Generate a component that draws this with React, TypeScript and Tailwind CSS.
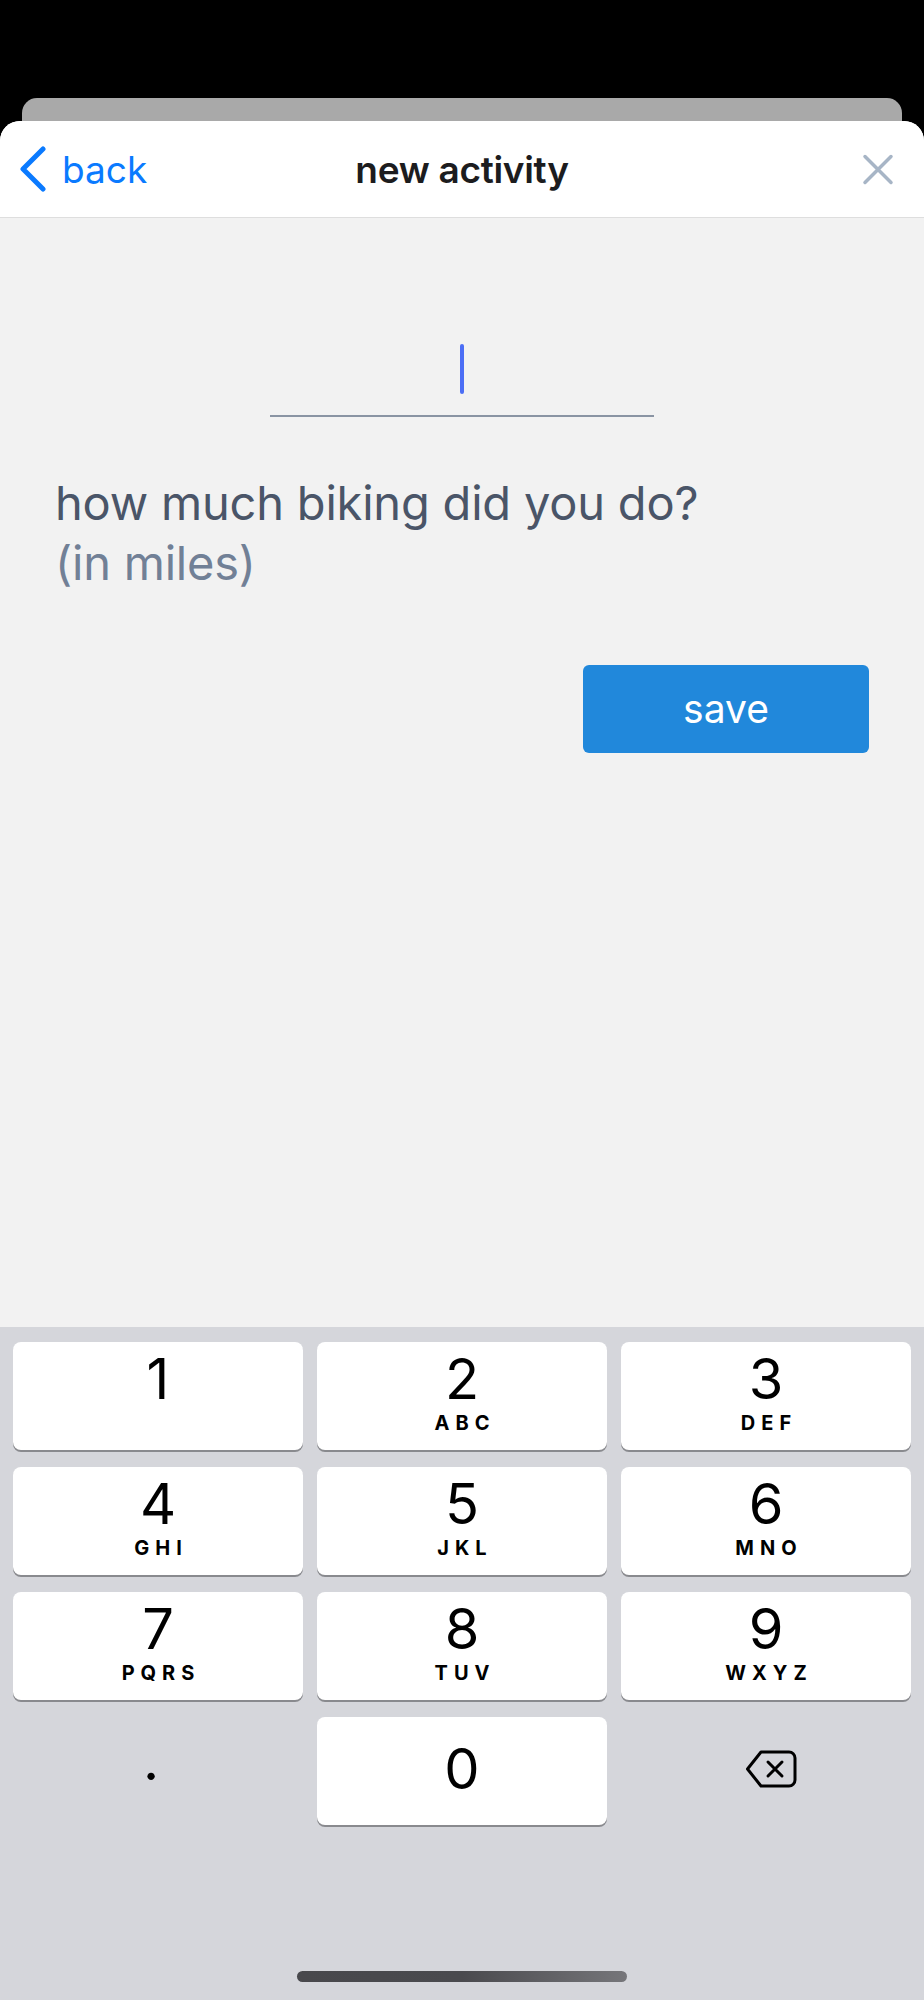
import React from 'react';

const keys = [
  { n: '1', l: '' },
  { n: '2', l: 'ABC' },
  { n: '3', l: 'DEF' },
  { n: '4', l: 'GHI' },
  { n: '5', l: 'JKL' },
  { n: '6', l: 'MNO' },
  { n: '7', l: 'PQRS' },
  { n: '8', l: 'TUV' },
  { n: '9', l: 'WXYZ' },
];

const font = { fontFamily: 'Inter, "Noto Sans", sans-serif' };

function BackChevron() {
  return (
    <svg width="28" height="46" viewBox="0 0 28 46" fill="none">
      <polyline points="24,3 4,23 24,43" stroke="#0a7aff" strokeWidth="5" strokeLinecap="round" strokeLinejoin="round" />
    </svg>
  );
}

function CloseIcon() {
  return (
    <svg width="32" height="31" viewBox="0 0 32 31" fill="none">
      <path d="M3 2.5 L29 28.5 M29 2.5 L3 28.5" stroke="#a7b5c6" strokeWidth="3.5" strokeLinecap="round" />
    </svg>
  );
}

function DeleteIcon() {
  return (
    <svg width="52" height="38" viewBox="0 0 52 38" fill="none">
      <path d="M16 2 H44 a6 6 0 0 1 6 6 V30 a6 6 0 0 1 -6 6 H16 L2.5 19 Z" stroke="#000" strokeWidth="3" strokeLinejoin="round" />
      <path d="M23 12 L37 26 M37 12 L23 26" stroke="#000" strokeWidth="3" strokeLinecap="round" />
    </svg>
  );
}

export default function App() {
  return (
    <div className="w-[924px] h-[2000px] bg-black flex flex-col overflow-hidden" style={font}>
      <div className="h-[98px] shrink-0" />
      <div className="mx-[22px] h-[23px] shrink-0 rounded-t-[15px] bg-[#a9a9a9]" />

      <div className="flex-1 flex flex-col rounded-t-[20px] bg-white overflow-hidden">
        {/* nav header */}
        <header className="relative h-[97px] shrink-0 flex items-center border-b border-[#dedede] bg-white">
          <div className="flex items-center pl-[19px] gap-[15px]">
            <BackChevron />
            <span className="text-[37px] text-[#0a7aff] leading-none">back</span>
          </div>
          <h1 className="absolute left-0 right-0 text-center text-[37px] font-semibold text-[#1c1c1e] leading-none tracking-[-0.3px]">
            new activity
          </h1>
          <div className="ml-auto pr-[30px] flex items-center">
            <CloseIcon />
          </div>
        </header>

        {/* form */}
        <div className="flex-1 bg-[#f2f2f2] px-[55px] flex flex-col">
          <div className="mt-[126px] mx-auto w-[384px] flex justify-center pb-[21px] border-b-2 border-[#8a94a3]">
            <div className="w-[4px] h-[50px] rounded-full bg-[#4c6ef5]" />
          </div>
          <div className="mt-[56px] text-[47px] leading-[60px] tracking-[-0.2px]">
            <div className="text-[#4a5568]">how much biking did you do?</div>
            <div className="text-[#718096]">(in miles)</div>
          </div>
          <button className="mt-[72px] ml-auto w-[286px] h-[88px] rounded-[6px] bg-[#2188db] text-white text-[39px] flex items-center justify-center">
            save
          </button>
        </div>

        {/* number pad */}
        <div className="h-[673px] shrink-0 bg-[#d5d6db] flex flex-col">
          <div className="grid grid-cols-3 gap-x-[14px] gap-y-[17px] px-[13px] pt-[15px]">
            {keys.map(k => (
              <div key={k.n} className="h-[108px] rounded-[8px] bg-white shadow-[0_2px_0_#898a8e] flex flex-col items-center pt-[9px]">
                <span className="text-[56px] leading-none text-black">{k.n}</span>
                {k.l && (
                  <span className="mt-[6px] text-[20px] leading-none font-bold text-black tracking-[6px] pl-[6px]">{k.l}</span>
                )}
              </div>
            ))}
            <div className="h-[108px] flex items-center justify-center pb-[22px] pr-[14px]">
              <span className="text-[56px] leading-none text-black">.</span>
            </div>
            <div className="h-[108px] rounded-[8px] bg-white shadow-[0_2px_0_#898a8e] flex items-center justify-center pb-[5px]">
              <span className="text-[56px] leading-none text-black">0</span>
            </div>
            <div className="h-[108px] flex items-center justify-center pl-[10px] pb-[4px]">
              <DeleteIcon />
            </div>
          </div>
          <div className="flex-1" />
          <div className="mx-auto mb-[18px] w-[330px] h-[11px] rounded-full bg-gradient-to-r from-[#48484c] via-[#4a4a4e] to-[#76767a]" />
        </div>
      </div>
    </div>
  );
}
